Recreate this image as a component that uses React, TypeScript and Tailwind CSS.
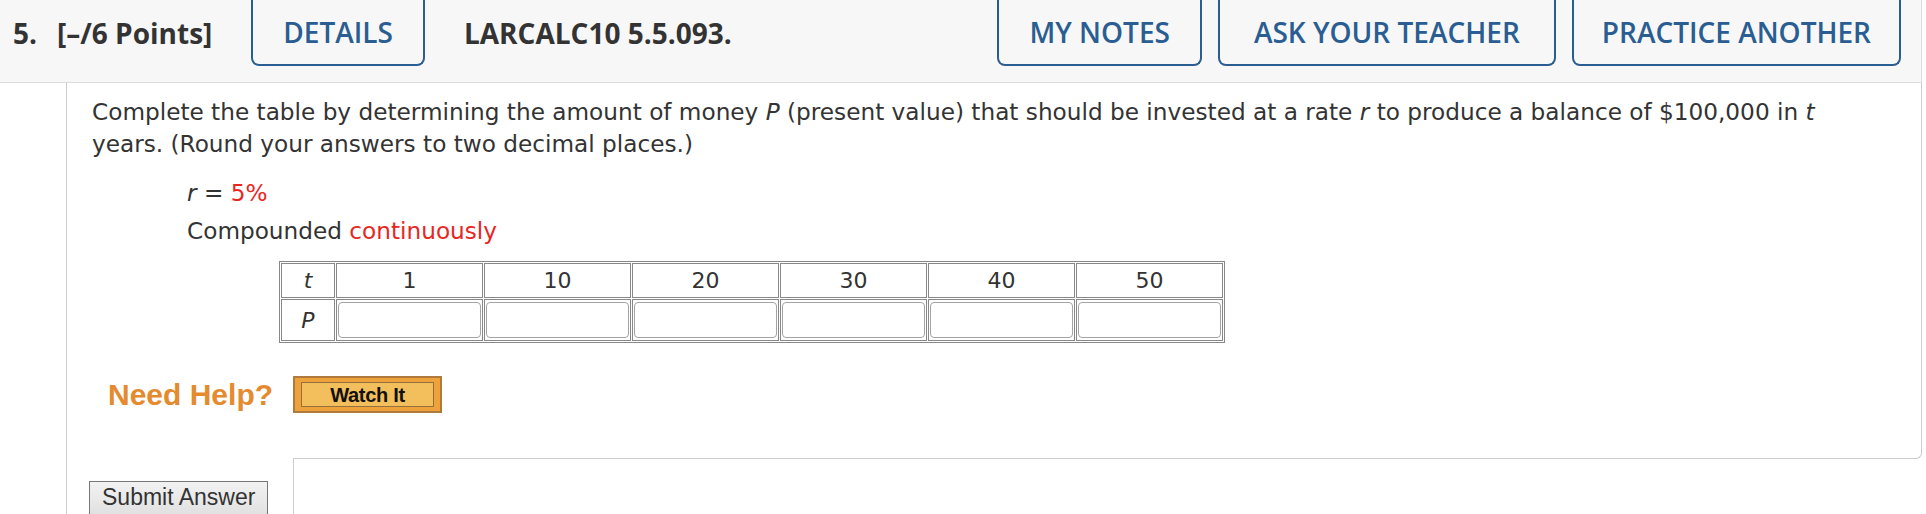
import React from 'react';

const HeaderButton: React.FC<{ label: string; className?: string }> = ({ label, className = '' }) => (
    <button
        className={`flex h-[66px] items-center rounded-b-[8px] border-2 border-t-0 border-[#2a5e92] text-[28px] font-semibold leading-none text-[#2a5e92] ${className}`}
    >
        {label}
    </button>
);

const years = [1, 10, 20, 30, 40, 50];

const App: React.FC = () => {
    return (
        <div className="h-[514px] w-[1926px] overflow-hidden bg-white">
            <div className="w-[1922px]">
                {/* Question header */}
                <div className="flex h-[83px] items-start border-b border-r border-[#dcdcdc] bg-[#f7f7f7] pl-[13px] pr-[20px] font-['Open_Sans',sans-serif]">
                    <div className="flex h-[66px] items-center text-[28px] font-bold leading-none text-[#333]">
                        <span>5.</span>
                        <span className="ml-[20px]">[–/6 Points]</span>
                    </div>
                    <HeaderButton label="DETAILS" className="ml-[39px] px-[30px]" />
                    <div className="ml-[39px] flex h-[66px] items-center text-[28px] font-bold leading-none text-[#333]">
                        LARCALC10 5.5.093.
                    </div>
                    <div className="ml-auto flex gap-[16px]">
                        <HeaderButton label="MY NOTES" className="px-[30px]" />
                        <HeaderButton label="ASK YOUR TEACHER" className="px-[34px]" />
                        <HeaderButton label="PRACTICE ANOTHER" className="px-[28px]" />
                    </div>
                </div>

                {/* Question body */}
                <div className="ml-[66px] border-l border-[#cccccc]">
                    <div className="flex flex-col">
                        <div className="border-r border-[#cccccc] pl-[25px] pb-[38px] font-['DejaVu_Sans',Verdana,sans-serif] text-[#333]">
                            <p className="pt-[13px] text-[23.2px] leading-[32px]">
                                Complete the table by determining the amount of money <i>P</i> (present value) that should be invested at a rate <i>r</i> to produce a balance of $100,000 in <i>t</i>
                                <br />
                                years. (Round your answers to two decimal places.)
                            </p>
                            <div className="mt-[14px] pl-[95px] text-[23.2px] leading-[38px]">
                                <div>
                                    <i>r</i> = <span className="text-[#e8261f]">5%</span>
                                </div>
                                <div>
                                    Compounded <span className="text-[#e8261f]">continuously</span>
                                </div>
                            </div>
                            <table className="ml-[187px] mt-[11px] border-separate border-spacing-[1px] border border-[#888] text-[22px]">
                                <tbody>
                                    <tr>
                                        <td className="h-[34px] w-[54px] border border-[#888] p-0 text-center italic">t</td>
                                        {years.map((y) => (
                                            <td key={y} className="h-[34px] w-[147px] border border-[#888] p-0 text-center">
                                                {y}
                                            </td>
                                        ))}
                                    </tr>
                                    <tr>
                                        <td className="h-[42px] border border-[#888] p-0 text-center italic">P</td>
                                        {years.map((y) => (
                                            <td key={y} className="h-[42px] border border-[#888] p-[1px]">
                                                <div className="h-[36px] w-full rounded-[4px] border border-[#a3a3a3] bg-white" />
                                            </td>
                                        ))}
                                    </tr>
                                </tbody>
                            </table>

                            {/* Need help */}
                            <div className="mt-[33px] flex items-center pl-[16px] font-['Liberation_Sans',Arial,sans-serif]">
                                <span className="text-[30px] font-bold leading-none text-[#e48a2f]">Need Help?</span>
                                <div className="ml-[20px] flex h-[37px] w-[149px] items-stretch border-2 border-[#b07a3c] bg-[#eea23b] px-[6px] py-[4px]">
                                    <div className="flex flex-1 items-center justify-center border border-[#93703d] bg-[#f3bf5c] text-[20px] font-bold leading-none tracking-[-0.3px] text-[#111]">
                                        Watch It
                                    </div>
                                </div>
                            </div>
                        </div>
                        <div className="ml-[226px] h-[8px] rounded-br-[6px] border-b border-r border-[#cccccc]" />
                    </div>

                    {/* Submit row */}
                    <div className="flex h-[60px]">
                        <div className="w-[226px] pl-[22px] pt-[22px]">
                            <button className="flex h-[40px] items-start border border-[#777] bg-gradient-to-b from-[#f2f2f2] to-[#dedede] px-[12px] pt-[4px] font-['Liberation_Sans',Arial,sans-serif] text-[23px] leading-[23px] text-[#333]">
                                Submit Answer
                            </button>
                        </div>
                        <div className="flex-1 border-l border-[#cccccc]" />
                    </div>
                </div>
            </div>
        </div>
    );
};

export default App;
